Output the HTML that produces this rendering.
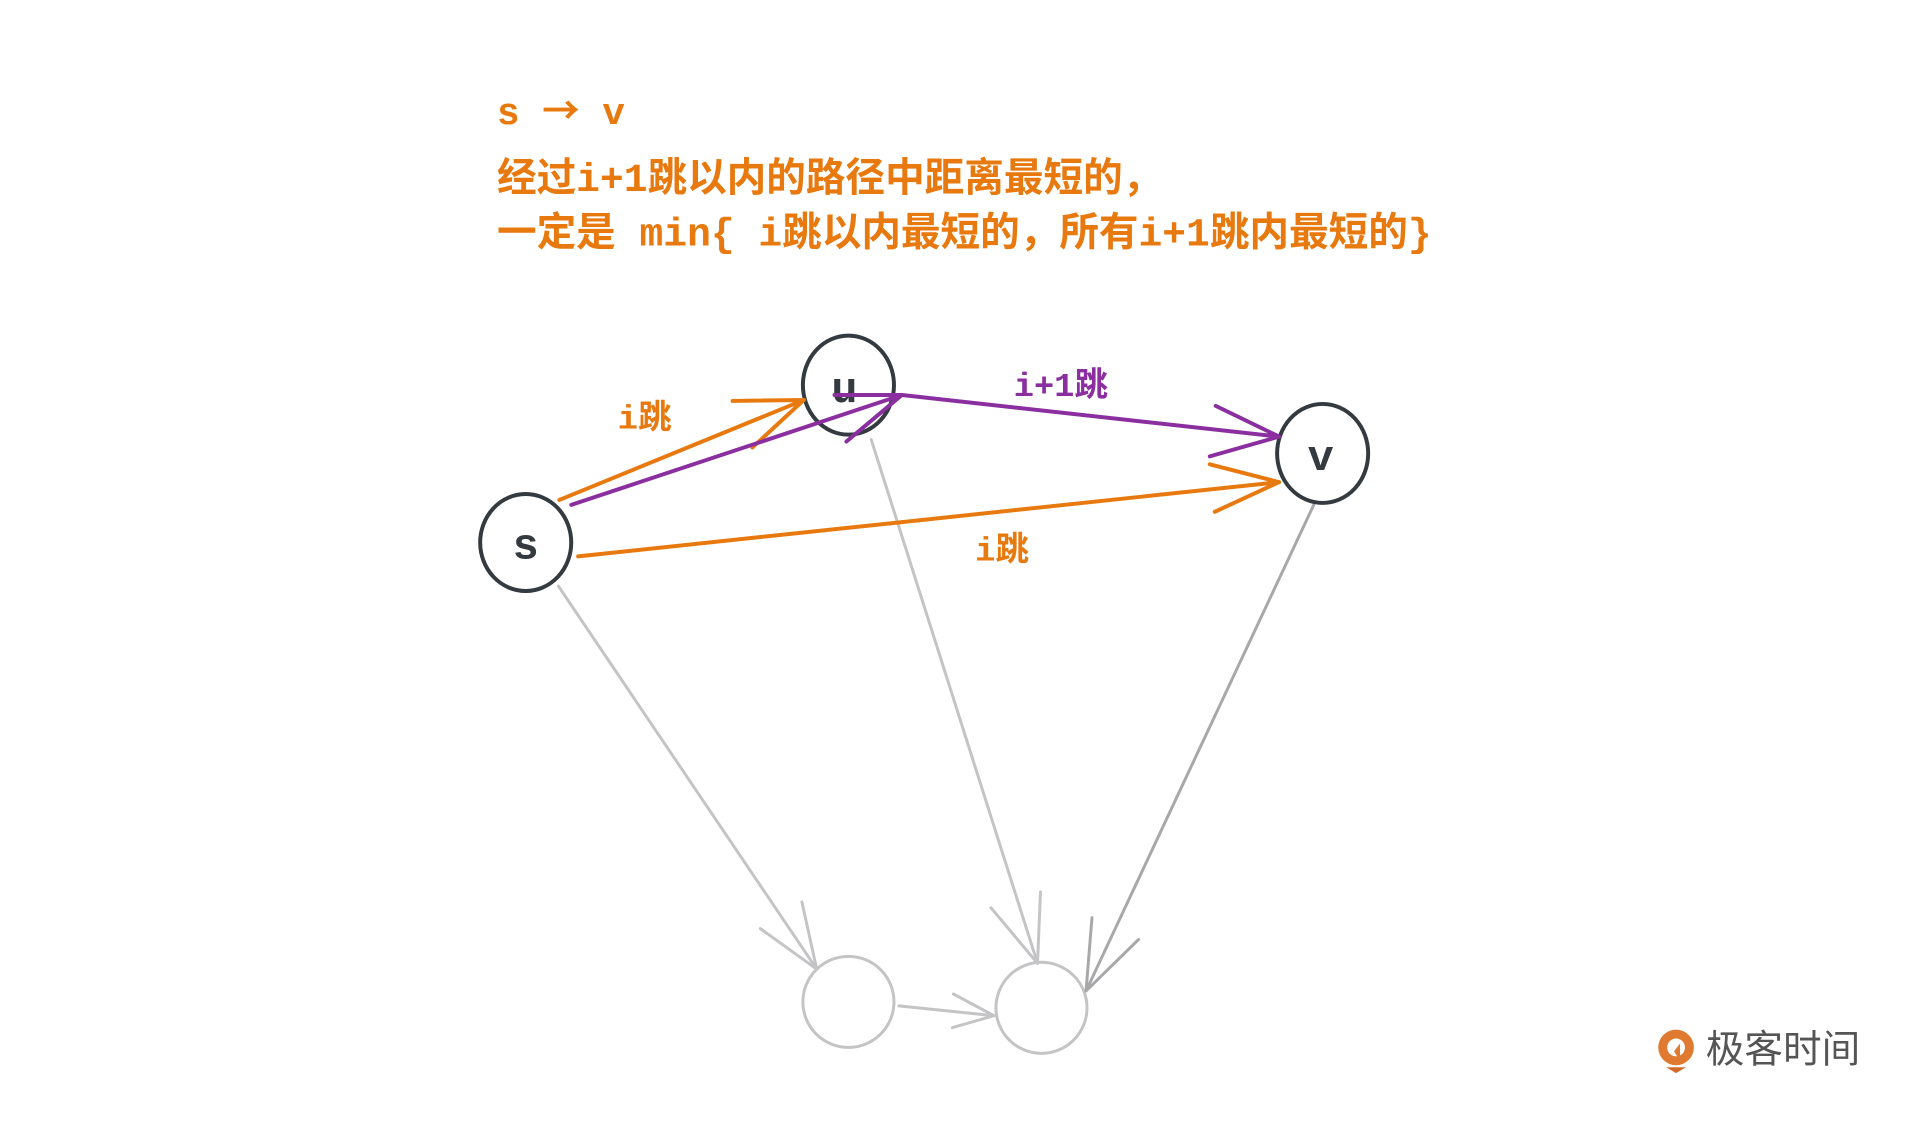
<!DOCTYPE html>
<html><head><meta charset="utf-8"><style>
html,body{margin:0;padding:0;background:#fff;width:1920px;height:1145px;overflow:hidden}
#w{position:absolute;left:0;top:0;width:1920px;height:1145px;transform:scale(0.99);transform-origin:0 0}
.t{position:absolute;left:502px;color:#e8790e;font-family:"Liberation Mono","Noto Sans CJK SC",monospace;font-weight:bold;font-size:40px;white-space:pre;line-height:1}
</style></head><body><div id="w">
<div class="t" style="top:90px;font-size:38px">s <span style="font-family:'Noto Sans CJK SC',sans-serif">→</span> v</div>
<div class="t" style="top:164px">经过i+1跳以内的路径中距离最短的，</div>
<div class="t" style="top:219px">一定是 min{ i跳以内最短的，所有i+1跳内最短的}</div>
<svg width="1920" height="1145" style="position:absolute;left:0;top:0" fill="none" stroke-linecap="round">
<g stroke="#c4c4c6" stroke-width="3">
<circle cx="857" cy="1012" r="46"/><circle cx="1052" cy="1018" r="46"/>
<path d="M564 592L825 979M768 938L825 979M810 911L825 979"/>
<path d="M880 444L1048 973M1001 917L1048 973M1051 901L1048 973"/>
<path d="M908 1016L1004 1026M963 1004L1004 1026M962 1038L1004 1026"/>
</g>
<g stroke="#a8a8aa" stroke-width="3"><path d="M1327 510L1097 1001M1150 949L1097 1001M1103 927L1097 1001"/></g>
<g stroke="#333a40" stroke-width="4">
<ellipse cx="531" cy="548" rx="46" ry="49"/><ellipse cx="857" cy="389" rx="46" ry="50"/><ellipse cx="1336" cy="458" rx="46" ry="50"/>
</g>
<g fill="#333a40" stroke="none" font-family="Liberation Mono,monospace" font-weight="bold" font-size="44" text-anchor="middle">
<text x="531" y="564">s</text><text x="853" y="406">u</text><text x="1334" y="475">v</text>
</g>
<g stroke="#e8790e" stroke-width="4">
<path d="M565 505L812 404M740 405L812 404M760 452L812 404"/>
<path d="M584 562L1292 487M1222 469L1292 487M1227 517L1292 487"/>
</g>
<g stroke="#8b2fa0" stroke-width="4">
<path d="M577 510L911 399M855 446L911 399M843 399L911 399"/>
<path d="M911 399L1292 441M1228 410L1292 441M1222 461L1292 441"/>
</g>
<g stroke="none" font-family="Liberation Mono,Noto Sans CJK SC,monospace" font-weight="bold" font-size="34">
<text x="624" y="433" fill="#e8790e">i跳</text>
<text x="1024" y="400" fill="#8b2fa0">i+1跳</text>
<text x="985" y="566" fill="#e8790e">i跳</text>
</g>
<g transform="translate(1693,1058)">
<circle cx="0" cy="0" r="18" fill="#e07a30"/><circle cx="0" cy="0" r="9" fill="#fff"/>
<path d="M-2 4L4 -4L4 14Z" fill="#e07a30" stroke="none"/>
<path d="M-10 20L0 26L10 20Z" fill="#d46a2a" stroke="none"/>
</g>
<text x="1723" y="1073" fill="#555" stroke="none" font-family="Noto Sans CJK SC,sans-serif" font-size="39">极客时间</text>
</svg>
</div></body></html>
